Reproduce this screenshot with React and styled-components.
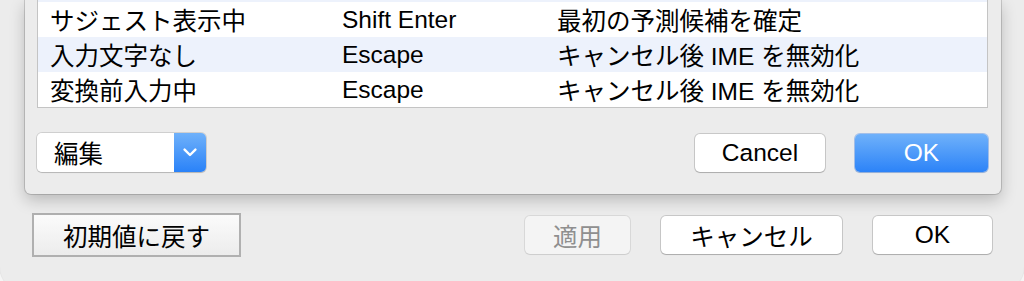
import React from 'react';
import styled, { createGlobalStyle } from 'styled-components';

const FONT = `"Liberation Sans", "Noto Sans CJK JP", sans-serif`;

const Global = createGlobalStyle`
  html, body {
    margin: 0;
    padding: 0;
    width: 1024px;
    height: 281px;
    overflow: hidden;
    background: #f5f5f5;
  }
  #root { width: 1024px; height: 281px; overflow: hidden; }
`;

const Window = styled.div`
  width: 1024px;
  height: 292px;
  box-sizing: border-box;
  background: #ececec;
  border-radius: 0 0 26px 26px;
  box-shadow: 0 0 0 1px rgba(0, 0, 0, 0.06);
  display: flex;
  flex-direction: column;
  font-family: ${FONT};
  font-size: 24.5px;
  color: #000;
`;

const Sheet = styled.div`
  position: relative;
  z-index: 1;
  margin: 0 23px 0 25px;
  height: 194px;
  box-sizing: border-box;
  padding: 0 13px 22px 12px;
  background: #ececec;
  border-radius: 0 0 6px 6px;
  box-shadow: 0 0 0 1px rgba(0, 0, 0, 0.15), 0 6px 16px rgba(0, 0, 0, 0.22);
  display: flex;
  flex-direction: column;
`;

const ScrollView = styled.div`
  height: 108px;
  box-sizing: border-box;
  background: #fff;
  border: 1px solid #c4c4c4;
  border-top: none;
  overflow: hidden;
`;

const List = styled.div`
  margin-top: -33px;
  display: flex;
  flex-direction: column;
`;

const Row = styled.div`
  display: grid;
  grid-template-columns: 292px 215px 1fr;
  height: 35px;
  align-items: center;
  background: ${(p) => (p.$alt ? '#edf2fc' : '#ffffff')};
`;

const Cell = styled.div`
  padding-left: 12px;
  white-space: nowrap;
  color: #000;
`;

const Controls = styled.div`
  margin-top: 25px;
  height: 39px;
  display: flex;
  align-items: center;
`;

const Popup = styled.div`
  width: 169px;
  height: 39px;
  display: flex;
  border-radius: 5px;
  overflow: hidden;
  box-shadow: 0 0 0 1px rgba(0, 0, 0, 0.12), 0 1px 1px rgba(0, 0, 0, 0.12);
`;

const PopupLabel = styled.div`
  flex: 1;
  background: #fff;
  display: flex;
  align-items: center;
  padding-left: 17px;
`;

const PopupArrow = styled.div`
  width: 32px;
  display: flex;
  align-items: center;
  justify-content: center;
  background: linear-gradient(to bottom, #6fb1fa, #2a82f8);
`;

const Spacer = styled.div`
  flex: 1;
`;

const Group = styled.div`
  display: flex;
  align-items: center;
  gap: ${(p) => p.$gap}px;
`;

const PushButton = styled.button`
  width: ${(p) => p.$w}px;
  height: 38px;
  padding: 0;
  border: none;
  border-radius: 5px;
  font-family: ${FONT};
  font-size: 24.5px;
  display: flex;
  align-items: center;
  justify-content: center;
  color: ${(p) => (p.$primary ? '#fff' : p.disabled ? '#8f8f8f' : '#000')};
  background: ${(p) =>
    p.$primary
      ? 'linear-gradient(to bottom, #6fb1fa, #2c83f8)'
      : p.disabled
      ? '#f4f4f4'
      : '#ffffff'};
  box-shadow: ${(p) =>
    p.$primary
      ? '0 0 0 1px rgba(30, 110, 230, 0.35), 0 1px 1px rgba(0, 0, 0, 0.12)'
      : p.disabled
      ? '0 0 0 1px rgba(0, 0, 0, 0.08), 0 1px 1px rgba(0, 0, 0, 0.06)'
      : '0 0 0 1px rgba(0, 0, 0, 0.15), 0 1px 1px rgba(0, 0, 0, 0.14)'};
`;

const SquareButton = styled.button`
  width: 209px;
  height: 44px;
  box-sizing: border-box;
  padding: 0;
  border: 2px solid #b0b0b0;
  border-radius: 0;
  background: linear-gradient(to bottom, #fbfbfb, #ececec);
  font-family: ${FONT};
  font-size: 24.5px;
  color: #000;
  display: flex;
  align-items: center;
  justify-content: center;
`;

const BottomBar = styled.div`
  padding: 19px 32px 0 32px;
  display: flex;
  align-items: center;
`;

const Chevron = () => (
  <svg width="14" height="9" viewBox="0 0 14 9">
    <polyline
      points="1.6,1.6 7,7 12.4,1.6"
      fill="none"
      stroke="#fff"
      strokeWidth="2.4"
      strokeLinecap="round"
      strokeLinejoin="round"
    />
  </svg>
);

const rows = [
  { a: '', b: '', c: '', alt: true },
  { a: 'サジェスト表示中', b: 'Shift Enter', c: '最初の予測候補を確定', alt: false },
  { a: '入力文字なし', b: 'Escape', c: 'キャンセル後 IME を無効化', alt: true },
  { a: '変換前入力中', b: 'Escape', c: 'キャンセル後 IME を無効化', alt: false },
];

export default function App() {
  return (
    <>
      <Global />
      <Window>
        <Sheet>
          <ScrollView>
            <List>
              {rows.map((r, i) => (
                <Row key={i} $alt={r.alt}>
                  <Cell>{r.a}</Cell>
                  <Cell>{r.b}</Cell>
                  <Cell>{r.c}</Cell>
                </Row>
              ))}
            </List>
          </ScrollView>
          <Controls>
            <Popup>
              <PopupLabel>編集</PopupLabel>
              <PopupArrow>
                <Chevron />
              </PopupArrow>
            </Popup>
            <Spacer />
            <Group $gap={30}>
              <PushButton $w={130}>Cancel</PushButton>
              <PushButton $w={133} $primary>
                OK
              </PushButton>
            </Group>
          </Controls>
        </Sheet>
        <BottomBar>
          <SquareButton>初期値に戻す</SquareButton>
          <Spacer />
          <Group $gap={31}>
            <PushButton $w={105} disabled>
              適用
            </PushButton>
            <PushButton $w={181}>キャンセル</PushButton>
            <PushButton $w={119}>OK</PushButton>
          </Group>
        </BottomBar>
      </Window>
    </>
  );
}
